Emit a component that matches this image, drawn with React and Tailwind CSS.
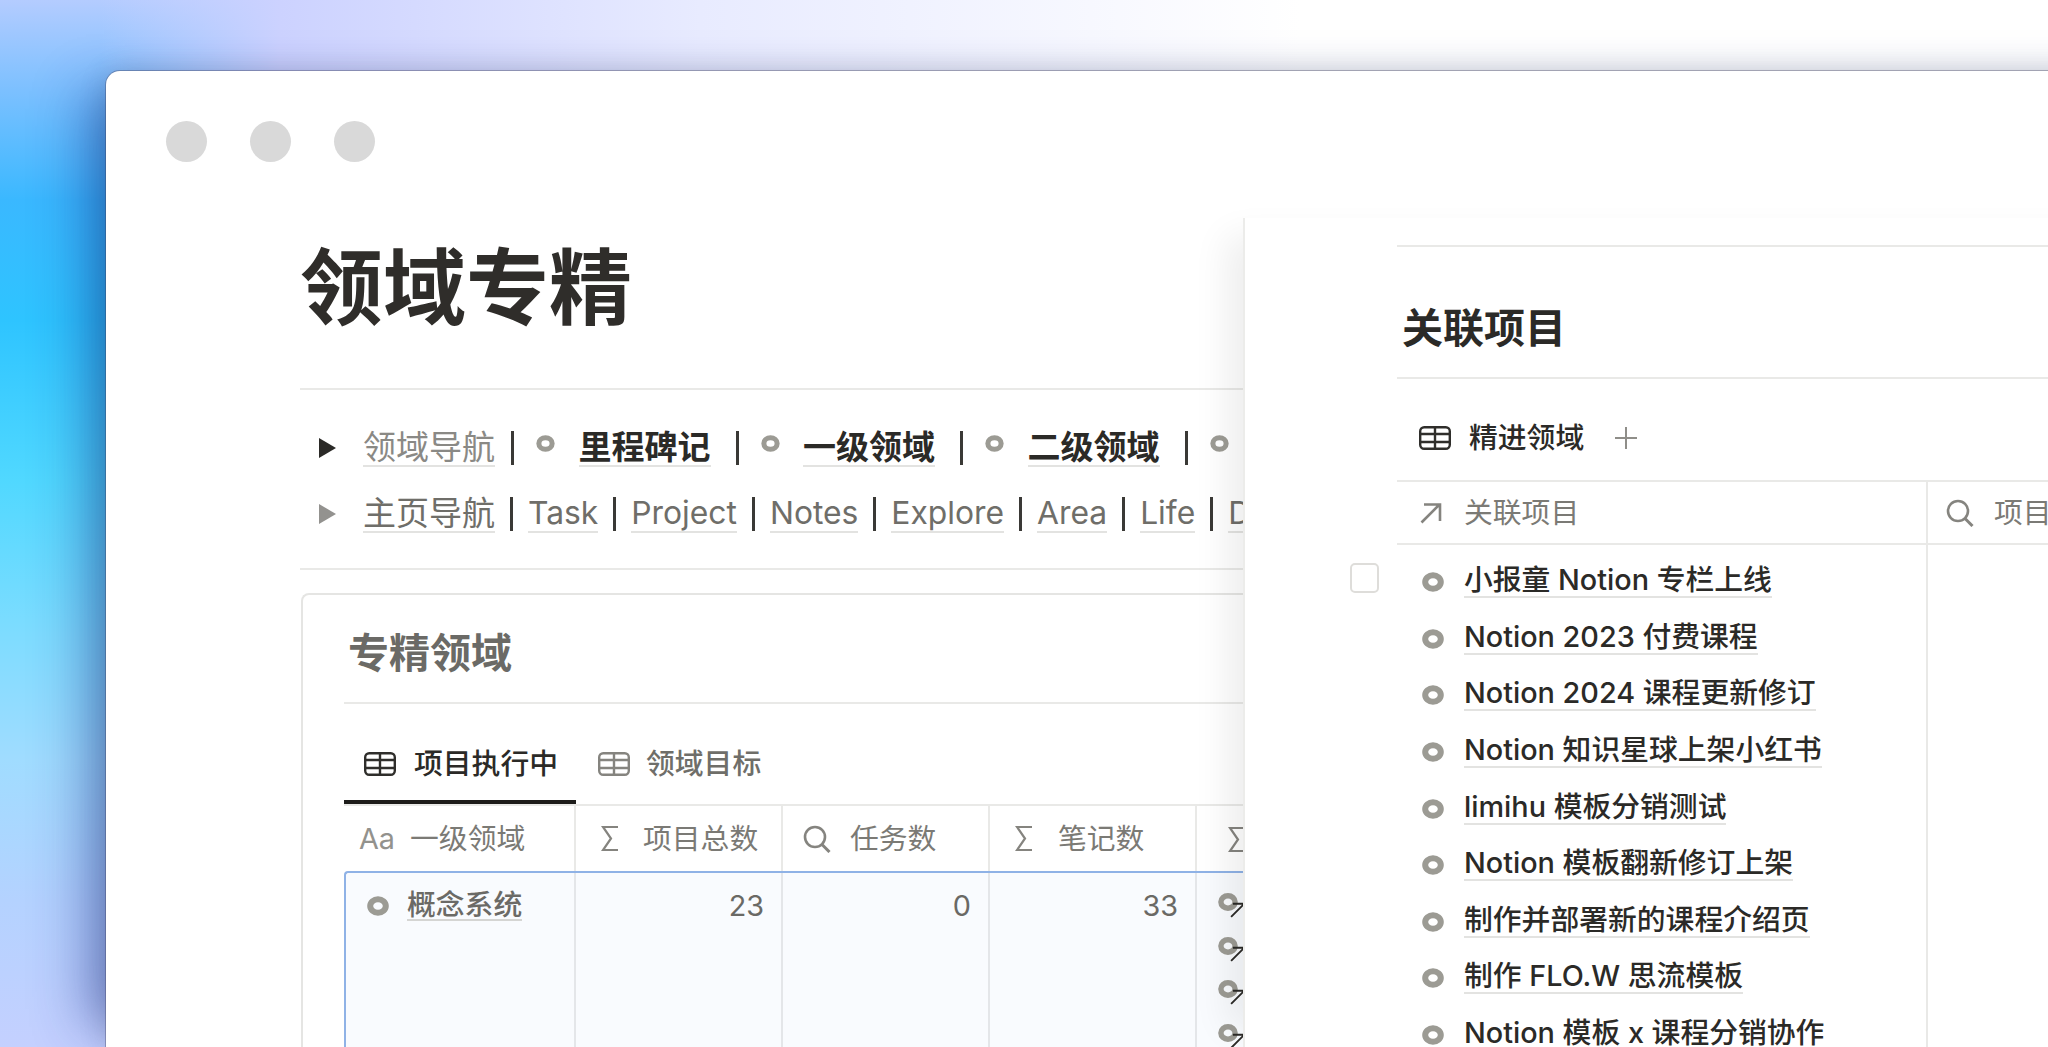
const font = { fontFamily: 'Inter, "Noto Sans CJK SC", sans-serif' };

function Ring({ className = "" }) {
  return (
    <svg viewBox="0 0 22 20" className={"shrink-0 overflow-visible " + className} fill="none">
      <ellipse cx="11" cy="10" rx="7.8" ry="6.8" stroke="#9c9b94" strokeWidth="6" />
    </svg>
  );
}

function TableIcon({ color = "#2f2e2b" }) {
  return (
    <svg viewBox="0 0 32 24" className="w-[32px] h-[24px] shrink-0" fill="none" stroke={color} strokeWidth="2.4">
      <rect x="1.2" y="1.2" width="29.6" height="21.6" rx="4" />
      <path d="M1.2 8H30.8M1.2 16H30.8M16 1.2V22.8" />
    </svg>
  );
}

function Sigma() {
  return (
    <svg viewBox="0 0 18 27" className="w-[18px] h-[27px] shrink-0" fill="none" stroke="#85847f" strokeWidth="2.2">
      <path d="M17 2H2L10 13.5L2 25H17" />
    </svg>
  );
}

function SearchIcon() {
  return (
    <svg viewBox="0 0 28 28" className="w-[28px] h-[28px] shrink-0" fill="none" stroke="#85847f" strokeWidth="2.6">
      <ellipse cx="12" cy="12" rx="10" ry="10" />
      <path d="M19 19.5L26.5 27" strokeWidth="3" />
    </svg>
  );
}

function ArrowIcon({ color = "#85847f", className = "w-[22px] h-[22px]" }) {
  return (
    <svg viewBox="0 0 22 22" className={"shrink-0 " + className} fill="none" stroke={color} strokeWidth="2.6">
      <path d="M1.5 20.5L19.5 2.5M4 2.5H20V19" />
    </svg>
  );
}

function Triangle({ color }) {
  return (
    <svg viewBox="0 0 17 20" className="w-[17px] h-[20px] shrink-0">
      <polygon points="0,0 17,10 0,20" fill={color} />
    </svg>
  );
}

function Sep({ l = 15, r = 15 }) {
  return <span className="w-[3px] h-[34px] bg-[#3a3936] shrink-0" style={{ marginLeft: l, marginRight: r }} />;
}

function Link({ children, className = "" }) {
  return <span className={"leading-[36px] border-b-2 border-[#e3e3e1] whitespace-nowrap " + className}>{children}</span>;
}

function NavRing({ className = "" }) {
  return <Ring className={"w-[19px] h-[17px] -mt-[9px] " + className} />;
}

function BoldNav({ children }) {
  return (
    <>
      <NavRing className="mr-[23.5px]" />
      <Link className="font-semibold text-[#2b2a27]">{children}</Link>
      <Sep l={25} r={22} />
    </>
  );
}

function Nav() {
  const items = ["Task", "Project", "Notes", "Explore", "Area", "Life", "Dashboard"];
  return (
    <div className="pt-[25px] pb-[21px] border-b-2 border-[#e9e9e7] pl-[19px] text-[33px]">
      <div className="h-[66px] flex items-center">
        <Triangle color="#2b2a27" />
        <Link className="ml-[27px] text-[#8a8985]">领域导航</Link>
        <Sep l={16} r={22} />
        <BoldNav>里程碑记</BoldNav>
        <BoldNav>一级领域</BoldNav>
        <BoldNav>二级领域</BoldNav>
        <NavRing />
      </div>
      <div className="h-[66px] flex items-center text-[#6f6e69]">
        <Triangle color="#93928f" />
        <Link className="ml-[27px]">主页导航</Link>
        {items.map((t) => (
          <span key={t} className="flex items-center text-[31.8px]">
            <Sep />
            <Link>{t}</Link>
          </span>
        ))}
      </div>
    </div>
  );
}

function HeaderCell({ icon, label, gap, pl }) {
  return (
    <div className="flex items-center border-r-2 border-[#e9e9e7] text-[#7b7a75]" style={{ paddingLeft: pl, gap }}>
      {icon}
      <span className="whitespace-nowrap">{label}</span>
    </div>
  );
}

function Card() {
  return (
    <div className="mt-[23px] h-[500px] w-[1200px] ml-px pl-[41px] border-l-2 border-t-2 border-[#e5e5e3] rounded-tl-[8px] text-[28.8px]">
      <div className="h-[109px] pt-[38px] pl-[4px] border-b-2 border-[#e9e9e7] text-[41px] leading-[41px] font-semibold text-[#6b6a66]">
        专精领域
      </div>
      <div className="flex h-[100px] border-b-2 border-[#e9e9e7] box-content">
        <div className="w-[232px] flex items-center gap-[18px] pl-[20px] pt-[24px] border-b-4 border-[#1d1c1a] font-medium text-[#2b2a27]">
          <TableIcon />
          <span>项目执行中</span>
        </div>
        <div className="flex items-center gap-[16px] pl-[22px] pt-[24px] border-b-4 border-transparent font-medium text-[#6f6e69]">
          <TableIcon color="#85847f" />
          <span>领域目标</span>
        </div>
      </div>
      <div className="grid grid-cols-[232px_207px_207px_207px_1fr] h-[65px]">
        <HeaderCell pl={15} gap={15} icon={<span className="text-[#93928d]">Aa</span>} label="一级领域" />
        <HeaderCell pl={25} gap={24} icon={<Sigma />} label="项目总数" />
        <HeaderCell pl={20} gap={19} icon={<SearchIcon />} label="任务数" />
        <HeaderCell pl={25} gap={25} icon={<Sigma />} label="笔记数" />
        <div className="flex items-center pl-[31px] pt-[1px]"><Sigma /></div>
      </div>
      <div className="grid grid-cols-[230px_207px_207px_207px_1fr] h-[240px] border-t-2 border-l-2 border-[#8fb2e6] rounded-tl-[4px] bg-[#f9fbfe] text-[#6a6965]">
        <div className="flex items-start gap-[18px] pl-[21px] pt-[18px] border-r-2 border-[#e4e6e9]">
          <Ring className="w-[22px] h-[20px] mt-[5px]" />
          <span className="leading-[28px] border-b-2 border-[#d5d5d3] font-medium text-[#6b6a66]">概念系统</span>
        </div>
        <div className="pt-[15px] pr-[17px] text-right leading-[36px] border-r-2 border-[#e4e6e9]">23</div>
        <div className="pt-[15px] pr-[17px] text-right leading-[36px] border-r-2 border-[#e4e6e9]">0</div>
        <div className="pt-[15px] pr-[17px] text-right leading-[36px] border-r-2 border-[#e4e6e9]">33</div>
        <div className="pl-[21px] pt-[19px] flex flex-col gap-[23.5px]">
          {[0, 1, 2, 3].map((i) => (
            <div key={i} className="relative w-[20px] h-[20px]">
              <Ring className="w-[20px] h-[20px]" />
              <div className="absolute left-[12px] top-[10px]">
                <ArrowIcon color="#2b2a27" className="w-[16px] h-[16px]" />
              </div>
            </div>
          ))}
        </div>
      </div>
    </div>
  );
}

function Panel() {
  const rows = [
    "小报童 Notion 专栏上线",
    "Notion 2023 付费课程",
    "Notion 2024 课程更新修订",
    "Notion 知识星球上架小红书",
    "limihu 模板分销测试",
    "Notion 模板翻新修订上架",
    "制作并部署新的课程介绍页",
    "制作 FLO.W 思流模板",
    "Notion 模板 x 课程分销协作",
  ];
  return (
    <div className="flex-1 relative z-10 bg-white border-l-2 border-[#ececea] shadow-[-34px_0_34px_-18px_rgba(0,0,0,0.07)] pl-[152px] pt-[27px] text-[28.8px] overflow-hidden">
      <div className="border-t-2 border-[#e9e9e7]" />
      <div className="h-[132px] pt-[61px] pl-[5px] border-b-2 border-[#e9e9e7] text-[41px] leading-[41px] font-semibold text-[#2b2a27]">
        关联项目
      </div>
      <div className="h-[101px] pt-[17px] pl-[22px] flex items-center text-[#2b2a27] font-medium">
        <TableIcon />
        <span className="ml-[18px]">精进领域</span>
        <svg viewBox="0 0 22 22" className="w-[22px] h-[22px] ml-[31px]" fill="none" stroke="#8f8e89" strokeWidth="2">
          <path d="M11 0V22M0 11H22" />
        </svg>
      </div>
      <div className="grid grid-cols-[531px_1fr] h-[65px] border-y-2 border-[#e9e9e7] text-[#7b7a75]">
        <div className="flex items-center gap-[22px] pl-[23px] border-r-2 border-[#e9e9e7]">
          <ArrowIcon />
          <span>关联项目</span>
        </div>
        <div className="flex items-center gap-[20px] pl-[18px]">
          <SearchIcon />
          <span className="whitespace-nowrap">项目状态</span>
        </div>
      </div>
      <div className="grid grid-cols-[531px_1fr] h-[520px]">
        <div className="pt-[8px] border-r-2 border-[#e9e9e7]">
          {rows.map((r, i) => (
            <div key={r} className="relative h-[56.6px] flex items-center text-[#2b2a27] font-medium">
              {i === 0 && (
                <span className="absolute -left-[47px] top-[10px] w-[29px] h-[30px] rounded-[5px] border-2 border-[#deddda] bg-white" />
              )}
              <Ring className="w-[22px] h-[20px] ml-[25px] mt-[2px]" />
              <span className="ml-[20px] leading-[32px] border-b-2 border-[#e3e3e1] whitespace-nowrap">{r}</span>
            </div>
          ))}
        </div>
        <div />
      </div>
    </div>
  );
}

export default function App() {
  return (
    <div
      style={font}
      className="h-screen overflow-hidden pl-[106px] pt-[71px] bg-[linear-gradient(90deg,rgba(200,208,255,0)_100px,#ccd2ff_280px,#e8ebff_700px,#fff_1300px),linear-gradient(180deg,#b4ccff_0px,#7cc0ff_90px,#3ab8ff_200px,#2ec4ff_320px,#50d8ff_480px,#7adcff_620px,#a0dcff_760px,#b4d2ff_900px,#c4d0ff_1047px)]"
    >
      <div className="w-[2100px] h-[976px] bg-white rounded-tl-[14px] overflow-hidden shadow-[0_0_0_1px_rgba(60,60,90,0.35),0_0_30px_rgba(0,0,0,0.12),-40px_0_50px_-20px_rgba(20,40,130,0.45)]">
        <div className="h-[147px] flex items-start gap-[43px] pl-[60px] pt-[50px]">
          <span className="w-[41px] h-[41px] rounded-full bg-[#d9d9d9]" />
          <span className="w-[41px] h-[41px] rounded-full bg-[#d9d9d9]" />
          <span className="w-[41px] h-[41px] rounded-full bg-[#d9d9d9]" />
        </div>
        <div className="flex h-[829px]">
          <div className="w-[1137px] shrink-0 pl-[194px] overflow-hidden">
            <div className="h-[172px] pt-[29px] border-b-2 border-[#e9e9e7] text-[83px] leading-[83px] font-bold text-[#2f2d2a] whitespace-nowrap">
              领域专精
            </div>
            <Nav />
            <Card />
          </div>
          <Panel />
        </div>
      </div>
    </div>
  );
}
